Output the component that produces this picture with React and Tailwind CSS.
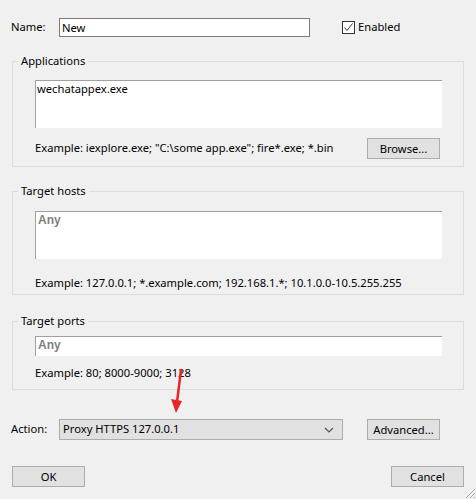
import React from 'react';

function Group({ title, children, className }) {
  return (
    <fieldset className={`mx-[12px] border border-[#dcdcdc] ${className}`}>
      <legend className="ml-[5px] px-[3px] leading-[14px] text-[#000]">{title}</legend>
      {children}
    </fieldset>
  );
}

function Btn({ children, className }) {
  return (
    <button className={`w-[73px] h-[21px] bg-[#e1e1e1] border border-[#adadad] text-black leading-none ${className || ''}`}>
      {children}
    </button>
  );
}

const anyFont = { fontFamily: '"Liberation Sans", sans-serif', fontSize: '12px' };

export default function App() {
  return (
    <div
      className="relative w-[476px] h-[499px] overflow-hidden bg-[#f0f0f0] text-[11.2px] text-black"
      style={{ fontFamily: '"Noto Sans", "Liberation Sans", sans-serif' }}
    >
      {/* Name row */}
      <div className="flex items-center pt-[18px] pl-[11px] h-[37px]">
        <span className="w-[48px]">Name:</span>
        <div className="w-[251px] h-[19px] border border-[#7a7a7a] bg-white pl-[2px] leading-[17px]">New</div>
        <label className="flex items-center ml-[32px] gap-[3px]">
          <span className="w-[13px] h-[13px] border border-[#333] bg-white flex items-center justify-center">
            <svg width="11" height="11" viewBox="0 0 11 11">
              <path d="M1.5 5.5 L4 8.5 L9.5 1.5" fill="none" stroke="#333" strokeWidth="1" />
            </svg>
          </span>
          <span>Enabled</span>
        </label>
      </div>

      {/* Applications */}
      <Group title="Applications" className="mt-[17px] h-[113px]">
        <div className="ml-[22px] mt-[12px] w-[407px] h-[48px] border-l border-t border-[#a0a0a0] bg-white pl-[1px] leading-[15px]">
          wechatappex.exe
        </div>
        <div className="flex items-center mt-[10px] ml-[22px]">
          <span className="w-[332px]">Example: iexplore.exe; "C:\some app.exe"; fire*.exe; *.bin</span>
          <Btn>Browse...</Btn>
        </div>
      </Group>

      {/* Target hosts */}
      <Group title="Target hosts" className="mt-[17px] h-[111px]">
        <div
          className="ml-[22px] mt-[13px] w-[407px] h-[48px] border-l border-t border-[#a0a0a0] bg-white pl-[2px] leading-[16px] font-bold text-[#7f7f7f]"
          style={anyFont}
        >
          Any
        </div>
        <div className="ml-[22px] mt-[16px]">Example: 127.0.0.1; *.example.com; 192.168.1.*; 10.1.0.0-10.5.255.255</div>
      </Group>

      {/* Target ports */}
      <Group title="Target ports" className="mt-[19px] h-[76px]">
        <div
          className="ml-[22px] mt-[8px] w-[407px] h-[20px] border-l border-t border-[#a0a0a0] bg-white pl-[2px] leading-[17px] font-bold text-[#7f7f7f]"
          style={anyFont}
        >
          Any
        </div>
        <div className="ml-[22px] mt-[9px]">Example: 80; 8000-9000; 3128</div>
      </Group>

      {/* Action row */}
      <div className="flex items-center pl-[11px] mt-[29px]">
        <span className="w-[48px]">Action:</span>
        <div className="flex items-center justify-between w-[284px] h-[21px] bg-[#e1e1e1] border border-[#adadad] pl-[3px] pr-[8px]">
          <span>Proxy HTTPS 127.0.0.1</span>
          <svg width="10" height="6" viewBox="0 0 10 6">
            <path d="M1 1 L5 5 L9 1" fill="none" stroke="#555" strokeWidth="1.2" />
          </svg>
        </div>
        <Btn className="ml-[24px]">Advanced...</Btn>
      </div>

      {/* Bottom buttons */}
      <div className="flex justify-between pl-[12px] pr-[12px] mt-[26px]">
        <Btn>OK</Btn>
        <Btn>Cancel</Btn>
      </div>

      {/* red annotation arrow */}
      <svg className="absolute left-[168px] top-[368px]" width="20" height="48" viewBox="0 0 20 48">
        <path d="M13 2 L9 34" stroke="#e8262a" strokeWidth="2.5" fill="none" strokeLinecap="round" />
        <path d="M3 31 L14 33 L8 45 Z" fill="#e8262a" />
      </svg>

      {/* resize grip */}
      <svg className="absolute right-0 bottom-0" width="12" height="12" viewBox="0 0 12 12">
        <path d="M11 2 L2 11 M11 6 L6 11 M11 10 L10 11" stroke="#a8a8a8" strokeWidth="1" />
      </svg>
    </div>
  );
}
